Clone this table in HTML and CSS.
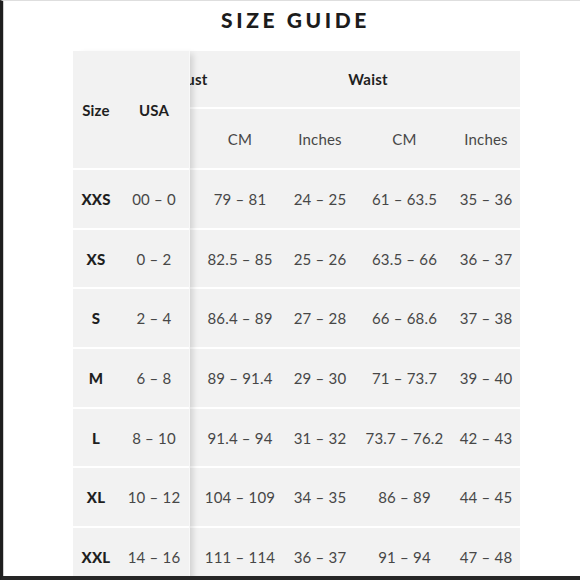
FILE: index.html
```html
<!DOCTYPE html>
<html lang="en">
<head>
<meta charset="utf-8">
<title>Size Guide</title>
<link rel="stylesheet" href="styles.css">
</head>
<body>
<div class="frame">
  <h1 class="title">SIZE GUIDE</h1>
  <div class="table-wrap">
    <div class="scroll-grid">
      <div class="group-row"><span class="group">Bust</span><span class="group">Waist</span></div>
      <div class="cell spacer"></div>
      <div class="cell sub">CM</div><div class="cell sub">Inches</div><div class="cell sub">CM</div><div class="cell sub">Inches</div>

      <div class="cell spacer"></div><div class="cell">79 – 81</div><div class="cell">24 – 25</div><div class="cell">61 – 63.5</div><div class="cell">35 – 36</div>
      <div class="cell spacer"></div><div class="cell">82.5 – 85</div><div class="cell">25 – 26</div><div class="cell">63.5 – 66</div><div class="cell">36 – 37</div>
      <div class="cell spacer"></div><div class="cell">86.4 – 89</div><div class="cell">27 – 28</div><div class="cell">66 – 68.6</div><div class="cell">37 – 38</div>
      <div class="cell spacer"></div><div class="cell">89 – 91.4</div><div class="cell">29 – 30</div><div class="cell">71 – 73.7</div><div class="cell">39 – 40</div>
      <div class="cell spacer"></div><div class="cell">91.4 – 94</div><div class="cell">31 – 32</div><div class="cell">73.7 – 76.2</div><div class="cell">42 – 43</div>
      <div class="cell spacer"></div><div class="cell">104 – 109</div><div class="cell">34 – 35</div><div class="cell">86 – 89</div><div class="cell">44 – 45</div>
      <div class="cell spacer"></div><div class="cell">111 – 114</div><div class="cell">36 – 37</div><div class="cell">91 – 94</div><div class="cell">47 – 48</div>
    </div>
    <div class="sticky-grid">
      <div class="cell head">Size</div><div class="cell head">USA</div>
      <div class="cell size">XXS</div><div class="cell">00 – 0</div>
      <div class="cell size">XS</div><div class="cell">0 – 2</div>
      <div class="cell size">S</div><div class="cell">2 – 4</div>
      <div class="cell size">M</div><div class="cell">6 – 8</div>
      <div class="cell size">L</div><div class="cell">8 – 10</div>
      <div class="cell size">XL</div><div class="cell">10 – 12</div>
      <div class="cell size">XXL</div><div class="cell">14 – 16</div>
    </div>
  </div>
</div>
</body>
</html>
```

FILE: styles.css
```css
html, body {
  margin: 0;
  padding: 0;
  background: #ffffff;
}

.frame {
  box-sizing: border-box;
  width: 580px;
  height: 580px;
  margin: 0;
  border-top: 1px solid #dedede;
  border-left: 3px solid #1f1f1f;
  border-bottom: 4px solid #262626;
  box-shadow: inset 1px 0 0 #cfcfcf;
  overflow: hidden;
  font-family: Lato, "Open Sans", sans-serif;
  color: #474747;
}

.title {
  margin: 0 0 11px 0;
  height: 39px;
  line-height: 38px;
  text-align: center;
  font-size: 21px;
  font-weight: 900;
  letter-spacing: 3.6px;
  padding-left: 8px;
  color: #1c1c1c;
}

.table-wrap {
  position: relative;
  margin-left: 70px;
  width: 447px;
  background: #f2f2f2;
}

.cell {
  box-sizing: border-box;
  display: flex;
  align-items: center;
  justify-content: center;
  border-bottom: 2px solid #ffffff;
  font-size: 15px;
  letter-spacing: 0.2px;
  white-space: nowrap;
}

.scroll-grid {
  display: grid;
  grid-template-columns: 124px 86px 74px 95px 68px;
  grid-template-rows: 58px 61px repeat(7, 59.7px);
}

.group-row {
  grid-column: 1 / -1;
  display: flex;
  padding-left: 31px;
  border-bottom: 2px solid #ffffff;
  align-items: center;
}

.group {
  width: 176px;
  text-align: center;
  font-weight: 700;
  font-size: 15px;
  letter-spacing: 0.2px;
  color: #1f1f1f;
}

.sticky-grid {
  position: absolute;
  top: 0;
  left: 0;
  bottom: 0;
  width: 116px;
  background: #f2f2f2;
  box-shadow: 6px 0 6px -3px rgba(0, 0, 0, 0.14);
  border-right: 1px solid #f8f8f8;
  display: grid;
  grid-template-columns: 46px 70px;
  grid-template-rows: 119px repeat(7, 59.7px);
  align-content: start;
}

.head {
  font-weight: 700;
  color: #1f1f1f;
}

.size {
  font-weight: 900;
  color: #1f1f1f;
}
```
